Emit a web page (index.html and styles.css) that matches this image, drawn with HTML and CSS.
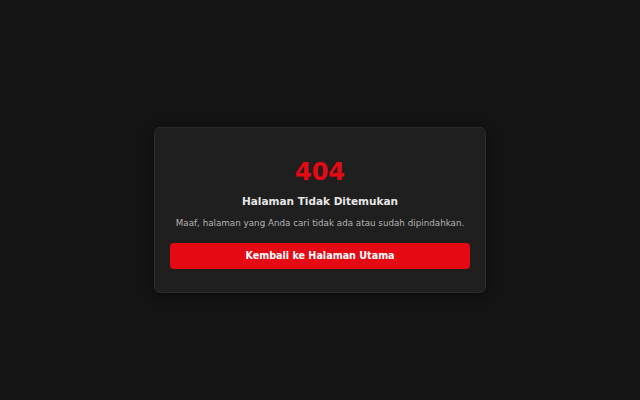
FILE: index.html
```html
<!DOCTYPE html>
<html lang="id">
<head>
<meta charset="utf-8">
<title>404</title>
<link rel="stylesheet" href="styles.css">
</head>
<body>
<div class="wrap">
  <div class="card">
    <h1 class="code">404</h1>
    <h2 class="title">Halaman Tidak Ditemukan</h2>
    <p class="msg">Maaf, halaman yang Anda cari tidak ada atau sudah dipindahkan.</p>
    <a class="btn" href="#">Kembali ke Halaman Utama</a>
  </div>
</div>
</body>
</html>
```
FILE: styles.css
```css
html, body {
  background: #141414;
}
body {
  margin: 8px;
  font-family: "DejaVu Sans", sans-serif;
}
.wrap {
  min-height: 100vh;
  padding-top: 2px;
  display: flex;
  align-items: center;
  justify-content: center;
}
.card {
  width: 300px;
  padding: 30px 15px 23px;
  background: #1f1f1f;
  border: 1px solid #2a2a2a;
  border-radius: 6px;
  box-shadow: 0 2px 10px rgba(0,0,0,0.5);
  text-align: center;
}
.code {
  margin: 0;
  font-size: 24px;
  font-weight: bold;
  color: #e50914;
  line-height: 28px;
}
.title {
  margin: 8px 0 0;
  font-size: 10.5px;
  font-weight: bold;
  color: #e5e5e5;
  line-height: 14px;
}
.msg {
  margin: 9px 0 0;
  font-size: 8.75px;
  color: #b3b3b3;
  line-height: 12px;
}
.btn {
  display: block;
  margin-top: 14px;
  height: 26px;
  line-height: 26px;
  background: #e50914;
  color: #fff;
  font-size: 9.6px;
  font-weight: bold;
  text-decoration: none;
  border-radius: 4px;
}
```
